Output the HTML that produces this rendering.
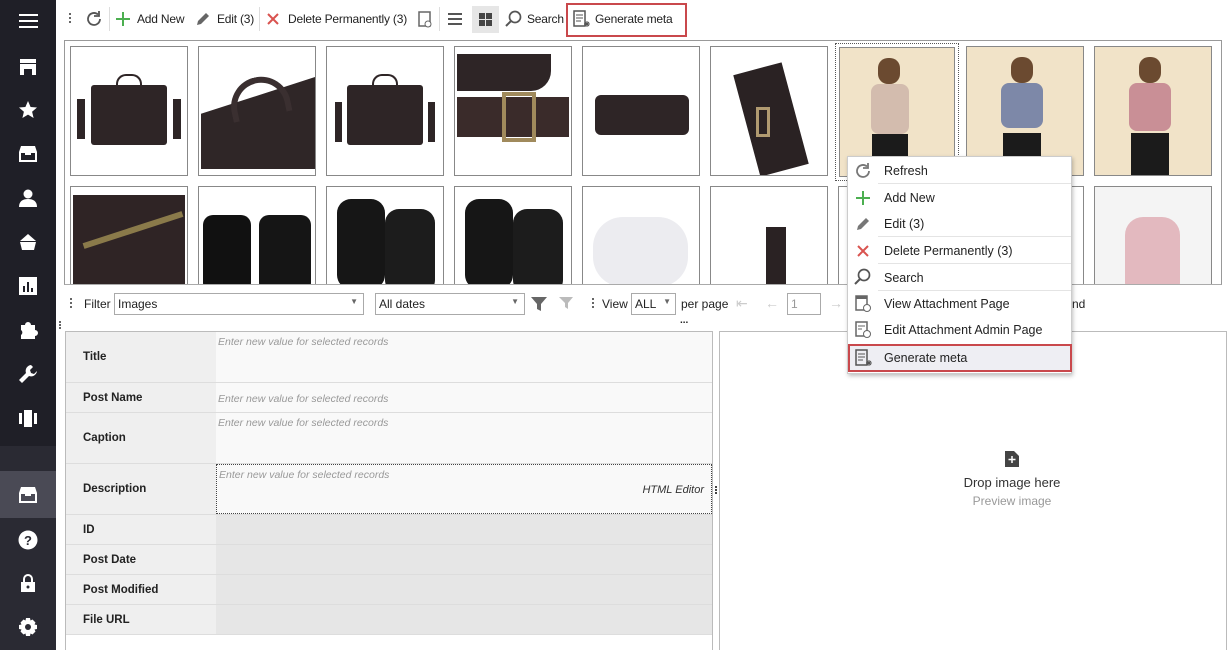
<!DOCTYPE html>
<html><head><meta charset="utf-8"><style>
*{box-sizing:border-box;margin:0;padding:0}
body{width:1227px;height:650px;overflow:hidden;background:#fff;font-family:"Liberation Sans",sans-serif;font-size:12px;color:#222;position:relative}
.a{position:absolute}
.sb{left:0;top:0;width:56px;height:650px;background:#1f1f27}
.ic{position:absolute;left:18px;width:20px;height:20px;fill:#fff}
.tb{left:56px;top:0;width:1171px;height:39px;background:#fff}
.t{position:absolute;top:12px;font-size:12px;color:#222;letter-spacing:-0.2px}
.grid{left:64px;top:40px;width:1158px;height:245px;border:1px solid #999;border-bottom:1px solid #aaa;overflow:hidden}
.th{position:absolute;width:118px;height:130px;border:1px solid #888;background:#fff;overflow:hidden}
.row{position:absolute;left:66px;width:646px;border-bottom:1px solid #ddd}
.lb{position:absolute;left:0;top:0;width:150px;height:100%;background:#efefef;font-weight:bold;font-size:11.5px;padding-left:17px;display:flex;align-items:center}
.vl{position:absolute;left:150px;top:0;right:0;height:100%;background:#f9f9f9;color:#999;font-style:italic;font-size:10.5px;padding:4px 2px}
.menu{left:847px;top:156px;width:225px;height:218px;background:#fff;border:1px solid #ccc;box-shadow:1px 2px 4px rgba(0,0,0,.25)}
.mi{position:absolute;left:36px;font-size:12.5px;color:#222}
.sep{position:absolute;left:30px;right:0;height:1px;background:#e4e4e4}
.sel{height:22px;border:1px solid #aaa;background:#fff;font-size:12px;padding:3px 3px}
</style></head><body>
<div class="a sb">
 <div class="a" style="left:19px;top:14px;width:19px;height:2px;background:#fff;box-shadow:0 6px #fff,0 12px #fff"></div>
 <svg class="ic" style="top:57px" viewBox="0 0 20 20"><path d="M2 2h16v4H2zM2 7h16v11h-4v-6H6v6H2z"/></svg>
 <svg class="ic" style="top:100px" viewBox="0 0 20 20"><path d="M10 1l2.6 6 6.4.5-4.9 4.2 1.5 6.3L10 14.6 4.4 18l1.5-6.3L1 7.5 7.4 7z"/></svg>
 <svg class="ic" style="top:144px" viewBox="0 0 20 20"><path d="M3 2h14l2 6v10H1V8zM3 9v7h14V9h-4v2H7V9z"/></svg>
 <svg class="ic" style="top:188px" viewBox="0 0 20 20"><circle cx="10" cy="6" r="4.5"/><path d="M1 19c0-6 4-8 9-8s9 2 9 8z"/></svg>
 <svg class="ic" style="top:232px" viewBox="0 0 20 20"><path d="M10 2l8 7H2zM2 10h16l-2 8H4zM8 13h4v2H8z"/></svg>
 <svg class="ic" style="top:276px" viewBox="0 0 20 20"><path d="M1 1h18v18H1zM5 10v6h2v-6zM9 6v10h2V6zM13 12v4h2v-4z"/></svg>
 <svg class="ic" style="top:320px" viewBox="0 0 20 20"><path d="M3 5h4a3 3 0 016 0h4v5a3 3 0 010 6v3H3v-4a3 3 0 000-5z"/></svg>
 <svg class="ic" style="top:364px" viewBox="0 0 20 20"><path d="M13 1a6 6 0 00-5 8L1 16l3 3 7-7a6 6 0 008-5l-3 3-3-1-1-3 3-3z"/></svg>
 <svg class="ic" style="top:408px" viewBox="0 0 20 20"><path d="M1 5h3v11H1zM6 2h8v17H6zM16 5h3v11h-3z"/></svg>
 <div class="a" style="left:0;top:446px;width:56px;height:204px;background:#2a2a33"></div>
 <div class="a" style="left:0;top:471px;width:56px;height:47px;background:#4a4a55"></div>
 <svg class="ic" style="top:485px" viewBox="0 0 20 20"><path d="M3 2h14l2 6v10H1V8zM3 9v7h14V9h-4v2H7V9z"/></svg>
 <svg class="ic" style="top:530px" viewBox="0 0 20 20"><circle cx="10" cy="10" r="9.5"/><text x="10" y="15" fill="#2a2a33" font-size="13" font-weight="bold" text-anchor="middle" font-family="Liberation Sans">?</text></svg>
 <svg class="ic" style="top:573px" viewBox="0 0 20 20"><path d="M5 9V6a5 5 0 0110 0v3h-2V6a3 3 0 00-6 0v3zM3 9h14v10H3z"/><circle cx="10" cy="14" r="1.5" fill="#2a2a33"/></svg>
 <svg class="ic" style="top:617px" viewBox="0 0 20 20"><path d="M8 1h4l.5 2.5 2-1 3 3-1 2 2.5.5v4l-2.5.5 1 2-3 3-2-1L12 19H8l-.5-2.5-2 1-3-3 1-2L1 12V8l2.5-.5-1-2 3-3 2 1z"/><circle cx="10" cy="10" r="3" fill="#2a2a33"/></svg>
</div>

<div class="a tb">
 <div class="a" style="left:13px;top:13px;width:2px;height:2px;background:#666;box-shadow:0 4px #666,0 8px #666"></div>
 <svg class="a" style="left:29px;top:10px" width="18" height="18" viewBox="0 0 18 18"><path d="M15 9a6 6 0 11-2-4.5" fill="none" stroke="#555" stroke-width="1.8"/><path d="M14 1v5h-5" fill="none" stroke="#555" stroke-width="1.8"/></svg>
 <div class="a" style="left:53px;top:7px;width:1px;height:24px;background:#ddd"></div>
 <svg class="a" style="left:59px;top:11px" width="16" height="16"><path d="M8 1v14M1 8h14" stroke="#4caf50" stroke-width="2"/></svg>
 <span class="t" style="left:81px">Add New</span>
 <svg class="a" style="left:139px;top:11px" width="16" height="16"><path d="M2 14l1-4 8-8 3 3-8 8z" fill="#666"/></svg>
 <span class="t" style="left:161px">Edit (3)</span>
 <div class="a" style="left:203px;top:7px;width:1px;height:24px;background:#ddd"></div>
 <svg class="a" style="left:210px;top:12px" width="14" height="14"><path d="M2 2l10 10M12 2L2 12" stroke="#d9534f" stroke-width="2"/></svg>
 <span class="t" style="left:232px">Delete Permanently (3)</span>
 <svg class="a" style="left:361px;top:10px" width="16" height="18"><rect x="2" y="2" width="11" height="14" fill="none" stroke="#666" stroke-width="1.5"/><circle cx="11" cy="14" r="3" fill="#fff" stroke="#666"/></svg>
 <div class="a" style="left:383px;top:7px;width:1px;height:24px;background:#ddd"></div>
 <div class="a" style="left:392px;top:13px;width:14px;height:2px;background:#555;box-shadow:0 5px #555,0 10px #555"></div>
 <div class="a" style="left:416px;top:6px;width:27px;height:27px;background:#e6e6e6"></div>
 <div class="a" style="left:423px;top:13px;width:6px;height:6px;background:#444;box-shadow:7px 0 #444,0 7px #444,7px 7px #444"></div>
 <svg class="a" style="left:449px;top:10px" width="18" height="18"><circle cx="10" cy="7" r="5.5" fill="none" stroke="#555" stroke-width="1.7"/><path d="M6 11l-5 5" stroke="#555" stroke-width="2"/></svg>
 <span class="t" style="left:471px">Search</span>
 <div class="a" style="left:510px;top:3px;width:121px;height:34px;border:2px solid #c9484c"></div>
 <svg class="a" style="left:517px;top:10px" width="18" height="18"><rect x="1" y="1" width="11" height="15" fill="none" stroke="#555" stroke-width="1.5"/><path d="M3 5h7M3 8h7M3 11h5" stroke="#555"/><path d="M14 11v6M11 14h6M12 12l4 4M16 12l-4 4" stroke="#555"/></svg>
 <span class="t" style="left:539px">Generate meta</span>
</div>

<div class="a grid">
 <div class="th" style="left:5px;top:5px"><div class="a" style="left:20px;top:38px;width:76px;height:60px;background:#2e2526;border-radius:3px"></div><div class="a" style="left:45px;top:27px;width:26px;height:16px;border:2px solid #2e2526;border-bottom:none;border-radius:10px 10px 0 0"></div><div class="a" style="left:6px;top:52px;width:8px;height:40px;background:#2e2526"></div><div class="a" style="left:102px;top:52px;width:8px;height:40px;background:#2e2526"></div></div>
 <div class="th" style="left:133px;top:5px"><div class="a" style="left:2px;top:30px;width:114px;height:92px;background:#2f2627;clip-path:polygon(0 40%,100% 0,100% 100%,0 100%)"></div><div class="a" style="left:30px;top:30px;width:60px;height:40px;border:6px solid #3a2f30;border-bottom:none;border-radius:30px 30px 0 0;transform:rotate(-12deg)"></div></div>
 <div class="th" style="left:261px;top:5px"><div class="a" style="left:20px;top:38px;width:76px;height:60px;background:#2e2526;border-radius:3px"></div><div class="a" style="left:45px;top:27px;width:26px;height:16px;border:2px solid #2e2526;border-bottom:none;border-radius:10px 10px 0 0"></div><div class="a" style="left:8px;top:55px;width:7px;height:40px;background:#2e2526"></div><div class="a" style="left:101px;top:55px;width:7px;height:40px;background:#2e2526"></div></div>
 <div class="th" style="left:389px;top:5px"><div class="a" style="left:2px;top:7px;width:94px;height:37px;background:#2e2526;border-radius:0 0 20px 0"></div><div class="a" style="left:2px;top:50px;width:112px;height:40px;background:#3a2b2a"></div><div class="a" style="left:47px;top:45px;width:34px;height:50px;border:4px solid #a08a5c"></div></div>
 <div class="th" style="left:517px;top:5px"><div class="a" style="left:12px;top:48px;width:94px;height:40px;background:#2e2526;border-radius:6px"></div></div>
 <div class="th" style="left:645px;top:5px"><div class="a" style="left:35px;top:20px;width:50px;height:105px;background:#2a2223;transform:rotate(-15deg)"></div><div class="a" style="left:45px;top:60px;width:14px;height:30px;border:3px solid #b09a70"></div></div>
 <div class="th" style="left:770px;top:2px;width:124px;height:138px;border:1px dotted #555;background:#fff"><div class="a" style="left:3px;top:3px;width:116px;height:130px;border:1px solid #888;background:#f1e3c8"><div class="a" style="left:38px;top:10px;width:22px;height:26px;background:#6b4a30;border-radius:10px"></div><div class="a" style="left:31px;top:36px;width:38px;height:50px;background:#d3bcae;border-radius:8px"></div><div class="a" style="left:32px;top:86px;width:36px;height:44px;background:#1b1b1b"></div></div></div>
 <div class="th" style="left:901px;top:5px;background:#f1e3c8"><div class="a" style="left:44px;top:10px;width:22px;height:26px;background:#6b4a30;border-radius:10px"></div><div class="a" style="left:34px;top:36px;width:42px;height:45px;background:#7d88a8;border-radius:8px"></div><div class="a" style="left:36px;top:86px;width:38px;height:44px;background:#1b1b1b"></div></div>
 <div class="th" style="left:1029px;top:5px;background:#f1e3c8"><div class="a" style="left:44px;top:10px;width:22px;height:26px;background:#6b4a30;border-radius:10px"></div><div class="a" style="left:34px;top:36px;width:42px;height:48px;background:#c98f96;border-radius:8px"></div><div class="a" style="left:36px;top:86px;width:38px;height:44px;background:#1b1b1b"></div></div>
 <div class="th" style="left:5px;top:145px"><div class="a" style="left:2px;top:8px;width:112px;height:120px;background:#2f2425"></div><div class="a" style="left:10px;top:40px;width:104px;height:6px;background:#8a7a4a;transform:rotate(-18deg)"></div></div>
 <div class="th" style="left:133px;top:145px"><div class="a" style="left:4px;top:28px;width:48px;height:72px;background:#111;border-radius:10px 10px 4px 4px"></div><div class="a" style="left:60px;top:28px;width:52px;height:72px;background:#151515;border-radius:10px 10px 4px 4px"></div></div>
 <div class="th" style="left:261px;top:145px"><div class="a" style="left:10px;top:12px;width:48px;height:90px;background:#161616;border-radius:14px"></div><div class="a" style="left:58px;top:22px;width:50px;height:85px;background:#1c1c1c;border-radius:14px"></div></div>
 <div class="th" style="left:389px;top:145px"><div class="a" style="left:10px;top:12px;width:48px;height:90px;background:#161616;border-radius:14px"></div><div class="a" style="left:58px;top:22px;width:50px;height:85px;background:#1c1c1c;border-radius:14px"></div></div>
 <div class="th" style="left:517px;top:145px"><div class="a" style="left:10px;top:30px;width:95px;height:70px;background:#ececf0;border-radius:30px"></div></div>
 <div class="th" style="left:645px;top:145px"><div class="a" style="left:55px;top:40px;width:20px;height:60px;background:#2a2223"></div></div>
 <div class="th" style="left:773px;top:145px"></div>
 <div class="th" style="left:901px;top:145px"></div>
 <div class="th" style="left:1029px;top:145px;background:#f4f4f4"><div class="a" style="left:30px;top:30px;width:55px;height:70px;background:#e3b9bf;border-radius:18px 18px 4px 4px"></div></div>
</div>

<div class="a" style="left:70px;top:298px;width:2px;height:2px;background:#666;box-shadow:0 4px #666,0 8px #666"></div>
<span class="a" style="left:84px;top:297px;font-size:12px">Filter</span>
<div class="a sel" style="left:114px;top:293px;width:250px">Images<span style="position:absolute;right:5px;top:3px;font-size:8px;color:#666">▼</span></div>
<div class="a sel" style="left:375px;top:293px;width:150px">All dates<span style="position:absolute;right:5px;top:3px;font-size:8px;color:#666">▼</span></div>
<svg class="a" style="left:530px;top:295px" width="18" height="18"><path d="M1 2h16l-6 7v7l-4-2V9z" fill="#666"/></svg>
<svg class="a" style="left:558px;top:295px" width="18" height="18"><path d="M1 2h14l-5 6v6l-3-2V8z" fill="#bbb"/></svg>
<div class="a" style="left:592px;top:298px;width:2px;height:2px;background:#666;box-shadow:0 4px #666,0 8px #666"></div>
<span class="a" style="left:602px;top:297px">View</span>
<div class="a sel" style="left:631px;top:293px;width:45px">ALL<span style="position:absolute;right:4px;top:3px;font-size:8px;color:#666">▼</span></div>
<span class="a" style="left:681px;top:297px">per page</span>
<span class="a" style="left:736px;top:295px;color:#ccc;font-size:14px">⇤</span>
<span class="a" style="left:765px;top:295px;color:#ccc;font-size:14px">←</span>
<div class="a sel" style="left:787px;top:293px;width:34px;color:#999">1</div>
<span class="a" style="left:829px;top:295px;color:#ccc;font-size:14px">→</span>
<span class="a" style="left:1072px;top:297px">nd</span>
<span class="a" style="left:680px;top:315px;font-size:10px;font-weight:bold">...</span>
<div class="a" style="left:59px;top:321px;width:2px;height:2px;background:#666;box-shadow:0 3px #666,0 6px #666"></div>

<div class="a" style="left:65px;top:331px;width:648px;height:319px;border:1px solid #bbb;border-bottom:none;background:#fff"></div>
<div class="row" style="top:332px;height:51px"><div class="lb">Title</div><div class="vl">Enter new value for selected records</div></div>
<div class="row" style="top:383px;height:30px"><div class="lb">Post Name</div><div class="vl" style="padding-top:10px">Enter new value for selected records</div></div>
<div class="row" style="top:413px;height:51px"><div class="lb">Caption</div><div class="vl">Enter new value for selected records</div></div>
<div class="row" style="top:464px;height:51px"><div class="lb">Description</div><div class="vl" style="border:1px dotted #444">Enter new value for selected records<span style="position:absolute;right:7px;top:19px;color:#333;font-size:11px">HTML Editor</span></div></div>
<div class="row" style="top:515px;height:30px"><div class="lb">ID</div><div class="vl" style="background:#e6e6e6"></div></div>
<div class="row" style="top:545px;height:30px"><div class="lb">Post Date</div><div class="vl" style="background:#e6e6e6"></div></div>
<div class="row" style="top:575px;height:30px"><div class="lb">Post Modified</div><div class="vl" style="background:#e6e6e6"></div></div>
<div class="row" style="top:605px;height:30px"><div class="lb">File URL</div><div class="vl" style="background:#e6e6e6"></div></div>
<div class="a" style="left:715px;top:486px;width:2px;height:2px;background:#444;box-shadow:0 3px #444,0 6px #444"></div>

<div class="a" style="left:719px;top:331px;width:508px;height:319px;border:1px solid #bbb;border-bottom:none"></div>
<svg class="a" style="left:1004px;top:450px" width="16" height="18"><path d="M1 1h9l5 5v11H1z" fill="#444"/><path d="M8 6v7M4.5 9.5h7" stroke="#fff" stroke-width="1.5"/></svg>
<div class="a" style="left:719px;top:475px;width:586px;text-align:center;font-size:13px;color:#333">Drop image here</div>
<div class="a" style="left:719px;top:494px;width:586px;text-align:center;font-size:12px;color:#999">Preview image</div>

<div class="a menu">
 <svg class="a" style="left:6px;top:5px" width="18" height="18"><path d="M15 9a6 6 0 11-2-4.5" fill="none" stroke="#777" stroke-width="1.8"/><path d="M14 1v5h-5" fill="none" stroke="#777" stroke-width="1.8"/></svg>
 <span class="mi" style="top:7px">Refresh</span><div class="sep" style="top:26px"></div>
 <svg class="a" style="left:7px;top:33px" width="16" height="16"><path d="M8 1v14M1 8h14" stroke="#4caf50" stroke-width="2"/></svg>
 <span class="mi" style="top:34px">Add New</span>
 <svg class="a" style="left:7px;top:59px" width="16" height="16"><path d="M2 14l1-4 8-8 3 3-8 8z" fill="#777"/></svg>
 <span class="mi" style="top:60px">Edit (3)</span><div class="sep" style="top:79px"></div>
 <svg class="a" style="left:8px;top:87px" width="14" height="14"><path d="M2 2l10 10M12 2L2 12" stroke="#d9534f" stroke-width="2"/></svg>
 <span class="mi" style="top:87px">Delete Permanently (3)</span><div class="sep" style="top:106px"></div>
 <svg class="a" style="left:6px;top:111px" width="18" height="18"><circle cx="10" cy="7" r="5.5" fill="none" stroke="#555" stroke-width="1.7"/><path d="M6 11l-5 5" stroke="#555" stroke-width="2"/></svg>
 <span class="mi" style="top:114px">Search</span><div class="sep" style="top:133px"></div>
 <svg class="a" style="left:7px;top:138px" width="18" height="18"><rect x="1" y="1" width="11" height="14" fill="none" stroke="#666" stroke-width="1.5"/><rect x="1" y="1" width="11" height="3" fill="#666"/><circle cx="12" cy="13" r="3.5" fill="#fff" stroke="#666"/></svg>
 <span class="mi" style="top:140px">View Attachment Page</span>
 <svg class="a" style="left:7px;top:164px" width="18" height="18"><rect x="1" y="1" width="11" height="14" fill="none" stroke="#666" stroke-width="1.5"/><path d="M3 5h7M3 8h4" stroke="#666"/><circle cx="12" cy="13" r="3.5" fill="#fff" stroke="#666"/></svg>
 <span class="mi" style="top:166px">Edit Attachment Admin Page</span>
 <div class="a" style="left:0;top:187px;width:224px;height:28px;border:2px solid #c9484c;background:#eeeef3"></div>
 <svg class="a" style="left:7px;top:192px" width="18" height="18"><rect x="1" y="1" width="11" height="15" fill="none" stroke="#555" stroke-width="1.5"/><path d="M3 5h7M3 8h7M3 11h5" stroke="#555"/><path d="M14 11v6M11 14h6M12 12l4 4M16 12l-4 4" stroke="#555"/></svg>
 <span class="mi" style="top:194px">Generate meta</span>
</div>
</body></html>
